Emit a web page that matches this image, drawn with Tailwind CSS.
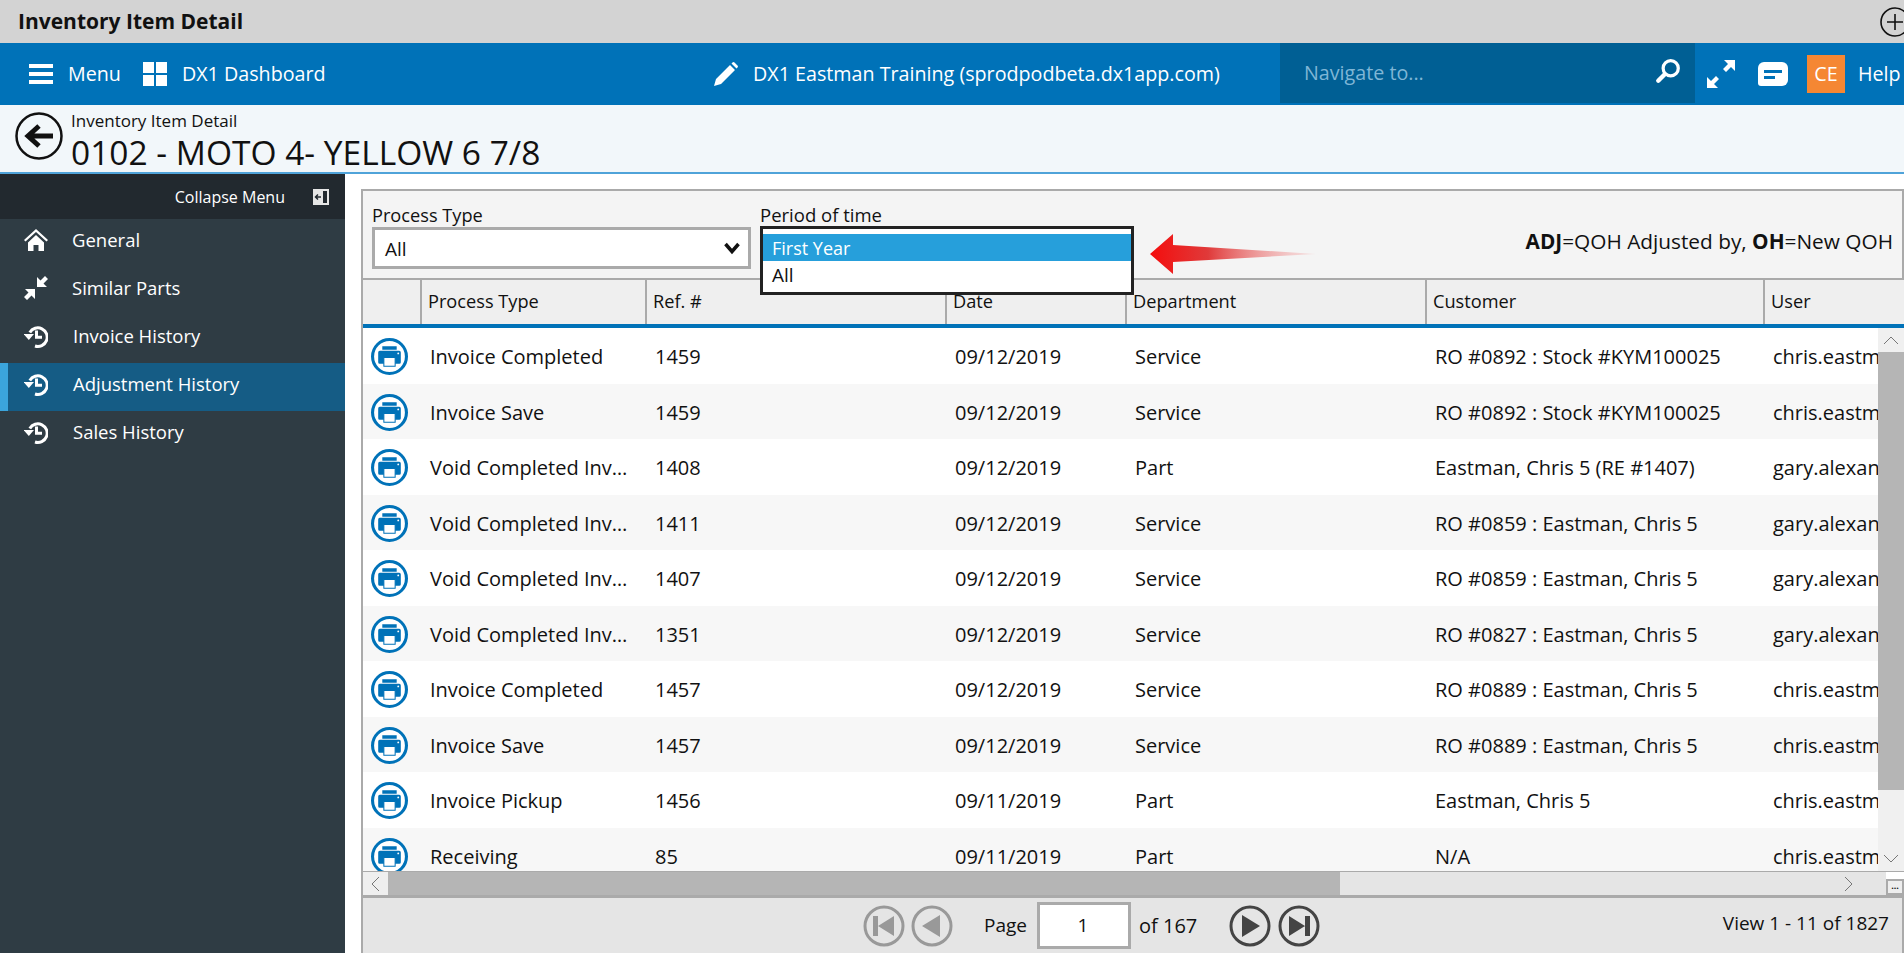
<!DOCTYPE html>
<html lang="en">

<head>
  <meta charset="UTF-8">
  <title>Inventory Item Detail</title>
  <script src="https://cdn.jsdelivr.net/npm/@tailwindcss/browser@4"></script>
</head>

<body class="h-[953px] w-[1904px] overflow-hidden bg-white font-['Open_Sans',sans-serif] text-[19px] text-[#111]">
  <svg class="hidden">
    <symbol id="history" viewBox="0 0 24 24">
      <path d="M5.800 8.500A9.300 9.300 0 1 1 11 22" fill="none" stroke="currentColor" stroke-width="3" />
      <path d="M-.5 10h10.500l-5.200 6z" fill="currentColor" />
      <path d="M12.500 6.500v6.800h5.500" fill="none" stroke="currentColor" stroke-width="3" />
    </symbol>
    <symbol id="printer" viewBox="0 0 36 36">
      <circle cx="18" cy="18" r="16.500" fill="#fff" stroke="#0072b8" stroke-width="3" />
      <path d="M11 8h14v3.500H11zM8.500 12.500h19A1.500 1.500 0 0 1 29 14v9.500a1.500 1.500 0 0 1-1.500 1.500h-19A1.500 1.500 0 0 1 7 23.500V14a1.500 1.500 0 0 1 1.500-1.500z" fill="#0072b8" />
      <path d="M12.500 19h11v8.500h-11z" fill="#fff" stroke="#0072b8" stroke-width="1" />
      <circle cx="26.500" cy="15" r=".9" fill="#fff" />
    </symbol>
  </svg>

  <div class="flex h-[43px] items-center justify-between overflow-hidden bg-[#d3d3d3] pl-[18px]">
    <span class="text-[21px] font-bold text-[#111]">Inventory Item Detail</span>
    <svg class="mr-[-6px] h-[30px] w-[30px] shrink-0" viewBox="0 0 30 30" fill="none" stroke="#111" stroke-width="1.600">
      <circle cx="15" cy="15" r="14" />
      <path d="M15 7v16M7 15h16" />
    </svg>
  </div>

  <header class="flex h-[62px] items-center whitespace-nowrap bg-[#0072b8] text-[19.700px] text-white">
    <div class="flex w-[714px] shrink-0 items-center pl-[29px]">
      <svg class="h-[24px] w-[24px]" viewBox="0 0 24 24" fill="#fff">
        <path d="M0 2h24v4H0zM0 10h24v4H0zM0 18h24v4H0z" />
      </svg>
      <span class="ml-[15px]">Menu</span>
      <svg class="ml-[22px] h-[24px] w-[24px]" viewBox="0 0 24 24" fill="#fff">
        <path d="M0 0h11v11H0zM13 0h11v11H13zM0 13h11v11H0zM13 13h11v11H13z" />
      </svg>
      <span class="ml-[15px]">DX1 Dashboard</span>
    </div>
    <div class="flex w-[566px] shrink-0 items-center">
      <svg class="h-[24px] w-[24px]" viewBox="0 0 24 24" fill="#fff">
        <path d="M0 24l2-7L16 3l5 5L7 22zM17.500 1.500l1-1a1.500 1.500 0 0 1 2 0l3 3a1.500 1.500 0 0 1 0 2l-1 1z" />
      </svg>
      <span class="ml-[15px]">DX1 Eastman Training (sprodpodbeta.dx1app.com)</span>
    </div>
    <div class="flex h-[60px] w-[415px] shrink-0 items-center justify-between self-start bg-[#005f94] pl-[24px] pr-[14px] text-[#7fb6d6]">
      <span>Navigate to...</span>
      <svg class="mb-[4px] h-[26px] w-[26px]" viewBox="0 0 24 24" fill="none" stroke="#fff" stroke-width="3">
        <circle cx="14.500" cy="9.500" r="7" />
        <path d="M9 15L3 21" stroke-linecap="round" stroke-width="4" />
      </svg>
    </div>
    <svg class="ml-[12px] h-[28px] w-[28px]" viewBox="0 0 28 28" fill="#fff">
      <path d="M28 0v11l-4-4-5 5-3-3 5-5-4-4zM0 28V17l4 4 5-5 3 3-5 5 4 4z" />
    </svg>
    <svg class="ml-[23px] h-[26px] w-[30px]" viewBox="0 0 30 26">
      <path d="M6 1h18a6 6 0 0 1 6 6v12a6 6 0 0 1-6 6H3a3 3 0 0 1-3-3V7a6 6 0 0 1 6-6z" fill="#fff" />
      <path d="M6 9h18v3H6zM6 15h11v3H6z" fill="#0072b8" />
    </svg>
    <div class="ml-[19px] flex h-[38px] w-[38px] items-center justify-center bg-[#f58733]">CE</div>
    <span class="ml-[13px]">Help</span>
  </header>

  <div class="flex h-[69px] items-start border-b-2 border-[#4fa3d9] bg-[#f2f7fa] pl-[15px]">
    <svg class="mt-[7px] h-[48px] w-[48px] shrink-0" viewBox="0 0 48 48" fill="none" stroke="#111">
      <circle cx="24" cy="24" r="22.500" stroke-width="2.500" />
      <path d="M38 24H14M24 14L13 24l11 10" stroke-width="5" />
    </svg>
    <div class="ml-[8px] flex flex-col">
      <span class="mt-[5px] text-[17px] leading-[22px]">Inventory Item Detail</span>
      <span class="mt-[-2px] text-[33.500px] leading-[44px]">0102 - MOTO 4- YELLOW 6 7/8</span>
    </div>
  </div>

  <div class="flex h-[779px]">
    <aside class="w-[345px] shrink-0 bg-[#2f3c44] text-[18.500px] text-white">
      <div class="flex h-[45px] items-center justify-end bg-[#22292f] pr-[16px] text-[16px]">
        <span>Collapse Menu</span>
        <svg class="ml-[28px] h-[16px] w-[16px]" viewBox="0 0 16 16">
          <path d="M0 0h16v16H0z" fill="#e6e6e6" />
          <path d="M10 2h4v12h-4z" fill="#22292f" />
          <path d="M8 8H3M5 5.500L2.500 8 5 10.500" stroke="#22292f" stroke-width="1.500" fill="none" />
        </svg>
      </div>
      <nav class="flex flex-col">
        <a class="flex h-[48px] items-center pb-[6px] pl-[24px]">
          <svg class="h-[24px] w-[24px]" viewBox="0 0 24 24" fill="#fff">
            <path d="M12 1L0 12l1.500 1.500L12 4l10.500 9.500L24 12z" />
            <path d="M4 14.500L12 7l8 7.500V23h-5.500v-6h-5v6H4z" />
          </svg>
          <span class="ml-[24px]">General</span>
        </a>
        <a class="flex h-[48px] items-center pb-[6px] pl-[24px]">
          <svg class="h-[24px] w-[24px]" viewBox="0 0 24 24" fill="#fff">
            <path d="M13 11V1l3.500 3.500L21 0l3 3-4.500 4.500L23 11zM11 13v10l-3.500-3.500L3 24l-3-3 4.500-4.500L1 13z" />
          </svg>
          <span class="ml-[24px]">Similar Parts</span>
        </a>
        <a class="flex h-[48px] items-center pb-[6px] pl-[24px]">
          <svg class="h-[24px] w-[24px]"><use href="#history" /></svg>
          <span class="ml-[25px]">Invoice History</span>
        </a>
        <a class="flex h-[48px] items-center border-l-[8px] border-[#3ba5dc] bg-[#155c85] pb-[6px] pl-[16px]">
          <svg class="h-[24px] w-[24px]"><use href="#history" /></svg>
          <span class="ml-[25px]">Adjustment History</span>
        </a>
        <a class="flex h-[48px] items-center pb-[6px] pl-[24px]">
          <svg class="h-[24px] w-[24px]"><use href="#history" /></svg>
          <span class="ml-[25px]">Sales History</span>
        </a>
      </nav>
    </aside>

    <main class="relative ml-[16px] mt-[15px] flex min-w-0 flex-1 flex-col border-l-2 border-[#aaa]">
      <div class="relative h-[91px] shrink-0 border-y-2 border-r-2 border-[#aaa] bg-[#f4f4f4]">
        <div class="flex gap-[9px] pl-[9px] pt-[12px]">
          <div class="w-[379px]">
            <div class="text-[18.200px] leading-[24px]">Process Type</div>
            <div class="flex h-[42px] items-center justify-between border-[3px] border-[#aaa] bg-white pl-[10px] pr-[8px]">
              <span class="pt-[2px]">All</span>
              <svg class="h-[14px] w-[16px]" viewBox="0 0 16 14" fill="none" stroke="#111" stroke-width="3.500">
                <path d="M1.500 3L8 10.500 14.500 3" />
              </svg>
            </div>
          </div>
          <div class="text-[18.500px] leading-[24px]">Period of time</div>
        </div>
        <div class="absolute bottom-[21px] right-[9px] text-[20.800px]"><b>ADJ</b>=QOH Adjusted by, <b>OH</b>=New QOH</div>
      </div>

      <div class="grid h-[48px] shrink-0 grid-cols-[59px_225px_300px_180px_300px_338px_1fr] border-b-[4px] border-[#0072b8] bg-[#efefef] text-[18.200px]">
        <div class="border-r-2 border-[#aaa]"></div>
        <div class="flex items-center border-r-2 border-[#aaa] pl-[6px]">Process Type</div>
        <div class="flex items-center border-r-2 border-[#aaa] pl-[6px]">Ref. #</div>
        <div class="flex items-center border-r-2 border-[#aaa] pl-[6px]">Date</div>
        <div class="flex items-center border-r-2 border-[#aaa] pl-[6px]">Department</div>
        <div class="flex items-center border-r-2 border-[#aaa] pl-[6px]">Customer</div>
        <div class="flex items-center pl-[6px]">User</div>
      </div>

      <div class="flex h-[543px] shrink-0">
        <div id="rows" class="min-w-0 flex-1 overflow-hidden"></div>
        <div class="flex w-[26px] shrink-0 flex-col items-center bg-[#f0f0f0]">
          <div class="flex h-[24px] items-center">
            <svg class="h-[9px] w-[16px]" viewBox="0 0 16 9" fill="none" stroke="#777"><path d="M1 8l7-7 7 7" /></svg>
          </div>
          <div class="h-[438px] w-full bg-[#b5b5b5]"></div>
          <div class="mt-auto flex h-[26px] items-center">
            <svg class="h-[9px] w-[16px]" viewBox="0 0 16 9" fill="none" stroke="#777"><path d="M1 1l7 7 7-7" /></svg>
          </div>
        </div>
      </div>

      <div class="flex h-[27px] shrink-0 border-t-[1px] border-b-[3px] border-[#aaa] bg-[#e5e5e5]">
        <div class="flex w-[25px] items-center justify-center bg-[#efefef]">
          <svg class="h-[16px] w-[9px]" viewBox="0 0 9 16" fill="none" stroke="#777"><path d="M8 1L1 8l7 7" /></svg>
        </div>
        <div class="w-[952px] bg-[#b5b5b5]"></div>
        <div class="flex flex-1 items-center justify-end pr-[33px]">
          <svg class="h-[16px] w-[9px]" viewBox="0 0 9 16" fill="none" stroke="#777"><path d="M1 1l7 7-7 7" /></svg>
        </div>
        <div class="flex w-[18px] flex-col bg-white">
          <div class="mt-[7px] flex h-[16px] items-center justify-center border-2 border-[#aaa] bg-[#eee] text-[9px] font-bold leading-none">···</div>
        </div>
      </div>

      <div class="relative flex flex-1 items-center border-r-2 border-[#aaa] bg-[#e5e5e5]">
        <div class="flex items-center pl-[500px]">
          <svg class="h-[42px] w-[42px] text-[#999]" viewBox="0 0 42 42">
            <circle cx="21" cy="21" r="19" fill="none" stroke="currentColor" stroke-width="3" />
            <path d="M10 11h5v20h-5zM31 11v20L15 21z" fill="currentColor" />
          </svg>
          <svg class="ml-[6px] h-[42px] w-[42px] text-[#999]" viewBox="0 0 42 42">
            <circle cx="21" cy="21" r="19" fill="none" stroke="currentColor" stroke-width="3" />
            <path d="M29 10v22L11 21z" fill="currentColor" />
          </svg>
          <span class="ml-[31px]">Page</span>
          <div class="ml-[10px] flex h-[47px] w-[94px] items-center justify-center border-[3px] border-[#aaa] bg-white pr-[2px]">1</div>
          <span class="ml-[8px] text-[20px]">of 167</span>
          <svg class="ml-[32px] h-[42px] w-[42px] text-[#444]" viewBox="0 0 42 42">
            <circle cx="21" cy="21" r="19" fill="none" stroke="currentColor" stroke-width="3" />
            <path d="M13 10v22l18-11z" fill="currentColor" />
          </svg>
          <svg class="ml-[7px] h-[42px] w-[42px] text-[#444]" viewBox="0 0 42 42">
            <circle cx="21" cy="21" r="19" fill="none" stroke="currentColor" stroke-width="3" />
            <path d="M11 11v20l16-10zM27 11h5v20h-5z" fill="currentColor" />
          </svg>
        </div>
        <span class="absolute right-[13px] top-[11px]">View 1 - 11 of 1827</span>
      </div>

      <!-- open dropdown and the red callout arrow lie over the filter bar and grid header -->
      <div class="absolute left-[397px] top-[37px] z-10 h-[69px] w-[374px] border-[3px] border-[#222] bg-white pt-[5px]">
        <div class="flex h-[27px] items-center bg-[#269fdb] pl-[9px] pt-[1px] text-[18px] text-white">First Year</div>
        <div class="flex h-[29px] items-center pl-[9px]">All</div>
      </div>
      <svg class="absolute left-[787px] top-[44px] z-10 h-[42px] w-[166px]" viewBox="0 0 166 42">
        <defs>
          <linearGradient id="arrowFill" x1="0" x2="1" y1="0" y2="0">
            <stop offset="0" stop-color="#f40d0d" />
            <stop offset=".35" stop-color="#e03a3a" />
            <stop offset="1" stop-color="#f4a0a0" stop-opacity=".2" />
          </linearGradient>
        </defs>
        <path d="M0 21L23 1v11l143 9-143 8v12z" fill="url(#arrowFill)" />
      </svg>
    </main>
  </div>

  <script>
    const rows = [
      ['Invoice Completed', '1459', '09/12/2019', 'Service', 'RO #0892 : Stock #KYM100025', 'chris.eastman'],
      ['Invoice Save', '1459', '09/12/2019', 'Service', 'RO #0892 : Stock #KYM100025', 'chris.eastman'],
      ['Void Completed Invoice', '1408', '09/12/2019', 'Part', 'Eastman, Chris 5 (RE #1407)', 'gary.alexander'],
      ['Void Completed Invoice', '1411', '09/12/2019', 'Service', 'RO #0859 : Eastman, Chris 5', 'gary.alexander'],
      ['Void Completed Invoice', '1407', '09/12/2019', 'Service', 'RO #0859 : Eastman, Chris 5', 'gary.alexander'],
      ['Void Completed Invoice', '1351', '09/12/2019', 'Service', 'RO #0827 : Eastman, Chris 5', 'gary.alexander'],
      ['Invoice Completed', '1457', '09/12/2019', 'Service', 'RO #0889 : Eastman, Chris 5', 'chris.eastman'],
      ['Invoice Save', '1457', '09/12/2019', 'Service', 'RO #0889 : Eastman, Chris 5', 'chris.eastman'],
      ['Invoice Pickup', '1456', '09/11/2019', 'Part', 'Eastman, Chris 5', 'chris.eastman'],
      ['Receiving', '85', '09/11/2019', 'Part', 'N/A', 'chris.eastman'],
    ];

    document.getElementById('rows').innerHTML = rows.map((r, i) => `
      <div class="grid h-[55.500px] grid-cols-[59px_225px_300px_180px_300px_338px_1fr] items-center whitespace-nowrap text-[20px] ${i % 2 ? 'bg-[#f7f7f7]' : 'bg-white'}">
        <div class="pl-[8px] pt-[2px]"><svg class="h-[37px] w-[37px]"><use href="#printer" /></svg></div>
        <div class="truncate pl-[8px] pr-[14px] pt-[3px]">${r[0]}</div>
        <div class="pl-[8px] pt-[3px]">${r[1]}</div>
        <div class="pl-[8px] pt-[3px]">${r[2]}</div>
        <div class="pl-[8px] pt-[3px]">${r[3]}</div>
        <div class="pl-[8px] pt-[3px]">${r[4]}</div>
        <div class="overflow-hidden pl-[8px] pt-[3px]">${r[5]}</div>
      </div>`).join('');
  </script>
</body>

</html>
